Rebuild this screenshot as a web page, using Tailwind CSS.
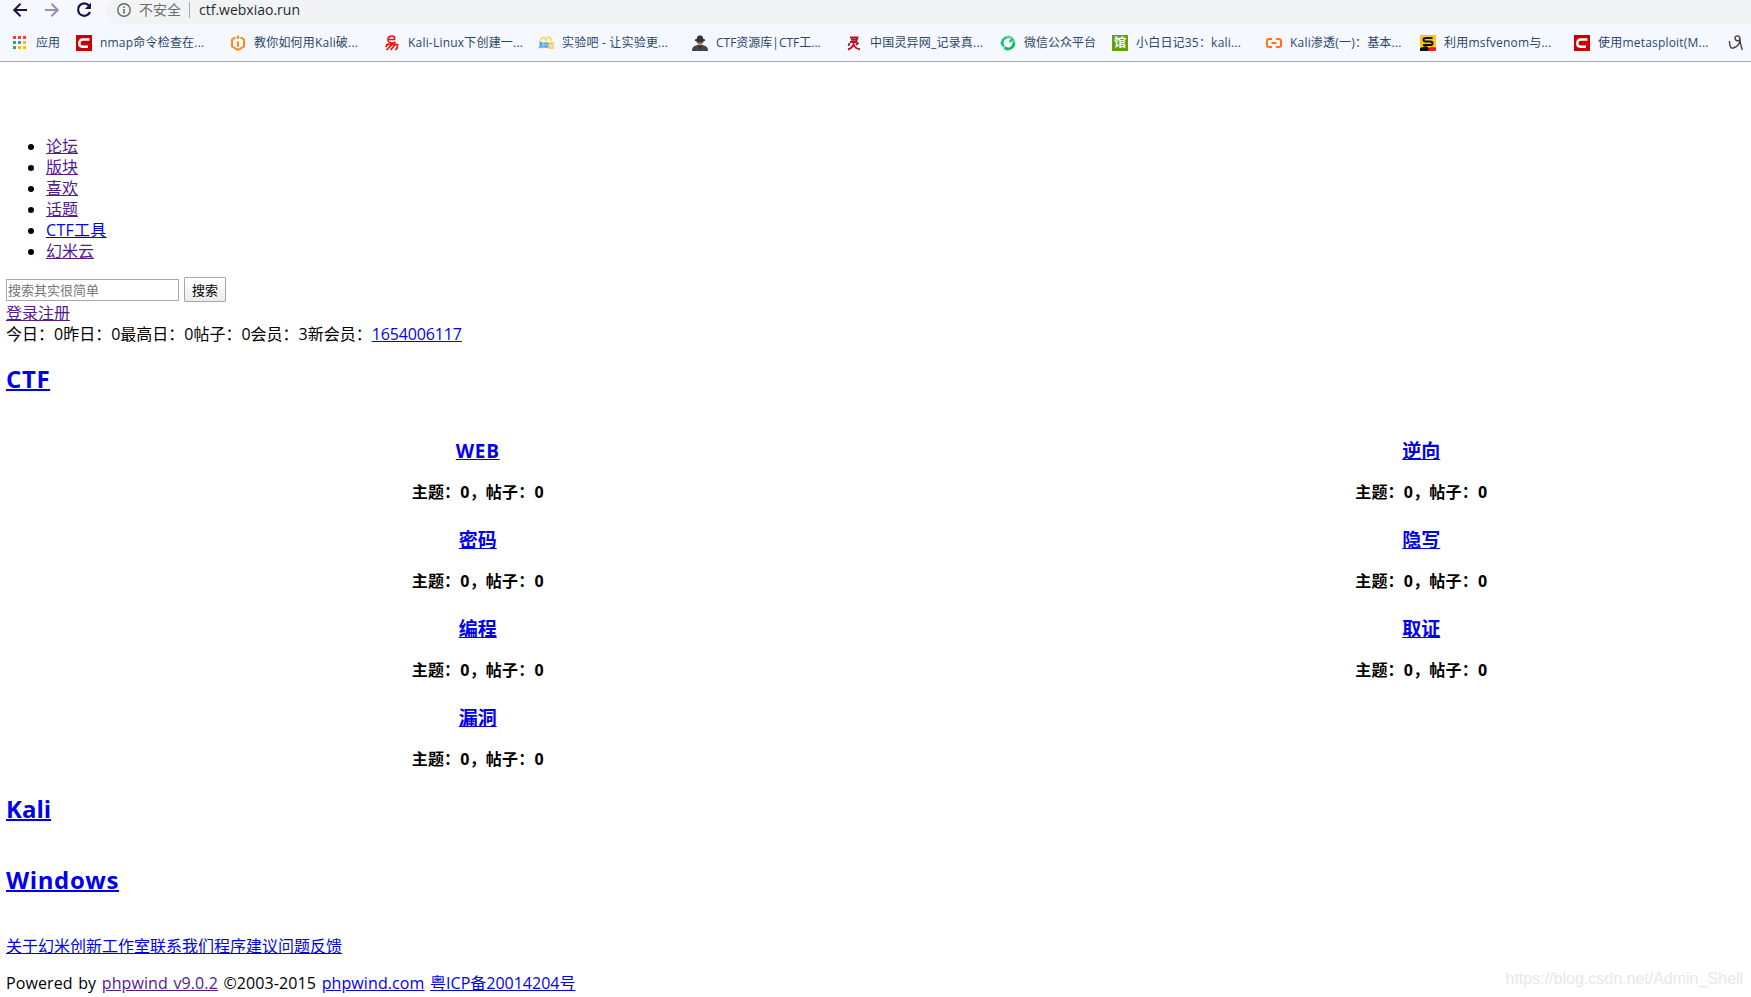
<!DOCTYPE html>
<html lang="zh-CN">
  <head>
    <meta charset="UTF-8" />
    <meta name="viewport" content="width=device-width, initial-scale=1.0" />
    <title>ctf.webxiao.run</title>
    <script src="https://cdn.jsdelivr.net/npm/@tailwindcss/browser@4"></script>
  </head>
  <body class="relative h-screen w-screen overflow-hidden bg-white text-black font-['Open_Sans','Noto_Sans_CJK_SC',sans-serif] text-base leading-[21px]">
    <!-- Browser toolbar -->
    <header class="h-[62px] bg-[#f5f8fe] border-b border-[#a9abb1] overflow-hidden whitespace-nowrap">
      <div class="flex h-6">
        <div class="flex w-[106px] shrink-0 pl-3 pt-[2px] gap-4">
          <svg class="size-4 shrink-0" viewBox="0 0 16 16" fill="none" stroke="#1b0f4c" stroke-width="2"><path d="M15 8H2.5M8.500 1.800 2.300 8l6.200 6.200" /></svg>
          <svg class="size-4 shrink-0" viewBox="0 0 16 16" fill="none" stroke="#9690b4" stroke-width="2"><path d="M1 8h12.500M7.500 1.800 13.700 8l-6.200 6.200" /></svg>
          <svg class="size-4 shrink-0" viewBox="0 0 16 16"><path d="M13 3.600A6.200 6.200 0 1 0 14 10" fill="none" stroke="#1b0f4c" stroke-width="2.200" /><path d="M15 .8v6.200H8.800z" fill="#1b0f4c" /></svg>
        </div>
        <div class="flex-1 h-6 rounded-bl-[18px] rounded-tl-[10px] bg-[#f1f3f4] flex pl-[11px]">
          <svg class="size-[14px] mt-[3px] shrink-0" viewBox="0 0 14 14"><circle cx="7" cy="7" r="6.200" fill="none" stroke="#666" stroke-width="1.400" /><path d="M6.200 6h1.600v4.500H6.200zM6.200 3.400h1.600V5H6.200z" fill="#666" /></svg>
          <span class="ml-2 text-sm leading-5 text-[#6a6d70]">不安全</span>
          <span class="ml-2 mt-[2px] w-px h-4 bg-[#a5a7a9]"></span>
          <span class="ml-[9px] text-sm leading-5 text-[#27292c]">ctf.webxiao.run</span>
        </div>
      </div>
      <nav class="flex items-center h-[37px] text-xs tracking-[0.2px] text-[#2b4668]">
        <div class="flex items-center gap-2 w-[76px] pl-3 shrink-0 tracking-normal">
          <svg class="size-4" viewBox="0 0 16 16"><path fill="#ea4335" d="M1 1h3v3H1zM6 1h3v3H6zM11 1h3v3h-3z" /><path fill="#34a853" d="M1 6h3v3H1zM1 11h3v3H1z" /><path fill="#4285f4" d="M6 6h3v3H6z" /><path fill="#fbbc05" d="M11 6h3v3h-3zM6 11h3v3H6zM11 11h3v3h-3z" /></svg>
          <span>应用</span>
        </div>
        <div class="flex items-center gap-2 w-[154px] shrink-0">
          <svg class="size-4" viewBox="0 0 16 16"><path fill="#c90000" d="M0 0h16v16H0z" /><path d="M13.500 4.500H7Q3.500 4.500 3.300 8t3.200 3.700H12" fill="none" stroke="#fff" stroke-width="2.500" /></svg>
          <span>nmap命令检查在...</span>
        </div>
        <div class="flex items-center gap-2 w-[154px] shrink-0">
          <svg class="size-4" viewBox="0 0 16 16" fill="none" stroke="#fb8b1c" stroke-width="2"><path d="M5.500 2.300 2 4.500v7l6 3.400 6-3.400v-7l-3.500-2.200M8 6.500V12" /><path d="M8 .5v3.500" /></svg>
          <span>教你如何用Kali破...</span>
        </div>
        <div class="flex items-center gap-2 w-[154px] shrink-0">
          <svg class="size-4" viewBox="0 0 16 16" fill="none" stroke="#f01010" stroke-width="1.700"><path d="M5 4.500h5.500C11 1.500 10 1 8 1 5.500 1 4 2.500 4 4.500S6 8 8.500 8s3-1 3-1M2 9.500h11.500c0 3-.5 5-2.500 5M5 8.500 1.500 12M7.500 10 2.500 15M11 10l-4.500 5" /></svg>
          <span>Kali-Linux下创建一...</span>
        </div>
        <div class="flex items-center gap-2 w-[154px] shrink-0">
          <svg class="size-4" viewBox="0 0 16 16"><path d="M2 7C3 2 6 1 8 5c1-4 5-4 5 1" fill="none" stroke="#f6d873" stroke-width="1.800" /><path d="M1 8h4M3 7v5M1 10h4M1 13l2-2 2 2M6 8h4v4H6zM8 8v5" fill="none" stroke="#3d91d2" stroke-width="1.200" /><path d="M11 8h4v5h-4zM13 8v3" fill="none" stroke="#f1c84c" stroke-width="1.300" /></svg>
          <span>实验吧 - 让实验更...</span>
        </div>
        <div class="flex items-center gap-2 w-[154px] shrink-0 tracking-normal">
          <svg class="size-4" viewBox="0 0 16 16"><path d="M0 16c0-4 2-5 5-6h6c3 1 5 2 5 6z" fill="#41464b" /><path d="M5.500 5h5v4L8 11 5.500 9z" fill="#b9774d" /><path d="M5 3.500Q5 0 8 .5 11 0 11 3.500l2 1V6H3V4.500zM4.500 6h7v1.500h-7z" fill="#303439" /><path d="m7 11 1 4 1-4z" fill="#1d2023" /></svg>
          <span>CTF资源库|CTF工...</span>
        </div>
        <div class="flex items-center gap-2 w-[154px] shrink-0">
          <svg class="size-4" viewBox="0 0 16 16" fill="none" stroke="#b5122b" stroke-width="1.900"><path d="M4 2.500h7.500L10 7H4M5 4.700h6M3.500 8l-1 3M12.500 7.500 10 10M8 6c0 4-2 7-6 8.500M7.500 9.500c1 2.500 3 4.500 6.500 4.700" /></svg>
          <span>中国灵异网_记录真...</span>
        </div>
        <div class="flex items-center gap-2 w-[112px] shrink-0 tracking-normal">
          <svg class="size-4" viewBox="0 0 16 16" fill="none" stroke-width="2.700"><path d="M2.500 10A6 6 0 0 1 7 2.200" stroke="#20c773" /><path d="M6.500 2.200c4-1.200 7.500 2 7.300 5.800" stroke="#5bd79a" /><path d="M14 7.500c0 5-5 8-9.500 5.500" stroke="#12b965" /><path d="M1 7l3 5M12.500 4l-3 3M8 15l-3-3" stroke="#16bd69" stroke-width="1.800" /></svg>
          <span>微信公众平台</span>
        </div>
        <div class="flex items-center gap-2 w-[154px] shrink-0">
          <span class="size-4 bg-[#62a307] text-white font-bold text-xs leading-4 text-center tracking-normal">馆</span>
          <span>小白日记35：kali...</span>
        </div>
        <div class="flex items-center gap-2 w-[154px] shrink-0">
          <svg class="size-4" viewBox="0 0 16 16" fill="none" stroke="#ff741a" stroke-width="2"><path d="M6 4H3Q1 4 1 6v4q0 2 2 2h3M10 4h3q2 0 2 2v4q0 2-2 2h-3M5.500 8h5" /></svg>
          <span>Kali渗透(一)：基本...</span>
        </div>
        <div class="flex items-center gap-2 w-[154px] shrink-0">
          <svg class="size-4" viewBox="0 0 16 16"><rect width="16" height="16" rx="1" fill="#fbc70a" /><path d="M0 16v-3l6-2 3 2v3z" fill="#111" /><path d="M8 16q0-4 4-4t4 1v2l-1 1z" fill="#e81c16" /><path d="M12.500 3H6Q3.500 3 3.500 4.800T6 6.500h4q2.500 0 2.500 1.800T10 10H3" fill="none" stroke="#111" stroke-width="2" /></svg>
          <span>利用msfvenom与...</span>
        </div>
        <div class="flex items-center gap-2 w-[154px] shrink-0">
          <svg class="size-4" viewBox="0 0 16 16"><path fill="#c90000" d="M0 0h16v16H0z" /><path d="M13.500 4.500H7Q3.500 4.500 3.300 8t3.200 3.700H12" fill="none" stroke="#fff" stroke-width="2.500" /></svg>
          <span>使用metasploit(M...</span>
        </div>
        <svg class="size-4 shrink-0" viewBox="0 0 16 16" fill="none" stroke="#444" stroke-width="1.400"><path d="M1.500 6c0 7 2 8 5 6.500C10 11 12 8 12 4c0-4-5-4-5-1s4 4 5 1c0 4 1 7 2.300 11" /></svg>
      </nav>
    </header>

    <main class="pl-[6px] overflow-hidden whitespace-nowrap">
      <ul class="mt-[74px] pl-10 list-disc">
        <li><a class="text-[#551a8b] underline" href="#">论坛</a></li>
        <li><a class="text-[#551a8b] underline" href="#">版块</a></li>
        <li><a class="text-[#551a8b] underline" href="#">喜欢</a></li>
        <li><a class="text-[#551a8b] underline" href="#">话题</a></li>
        <li><a class="text-[#0000ee] underline tracking-[0.3px]" href="#">CTF工具</a></li>
        <li><a class="text-[#551a8b] underline" href="#">幻米云</a></li>
      </ul>
      <form class="mt-[15px] flex items-center gap-[5px] h-[25px] text-[13px]">
        <input class="w-[173px] h-[22px] mt-px px-px border border-[#a9a9a9] bg-white leading-4 placeholder:text-[#757575]" placeholder="搜索其实很简单" />
        <button type="button" class="w-[42px] h-[25px] border border-[#a6a6a6] rounded-[1px] bg-linear-to-b from-white to-[#ececec] leading-4">搜索</button>
      </form>
      <div class="mt-px"><a class="text-[#551a8b] underline" href="#">登录注册</a></div>
      <div>今日：0昨日：0最高日：0帖子：0会员：3新会员：<a class="text-[#0000ee] underline tracking-[-0.15px]" href="#">1654006117</a></div>

      <h2 class="mt-[18px] h-[31px] text-2xl leading-[31px] font-bold tracking-[0.6px]"><a class="text-[#0000ee] underline decoration-2" href="#">CTF</a></h2>
      <!-- The board table is wider than the window -->
      <div class="mt-[45px] w-[1887px] grid grid-cols-2 auto-rows-[89px] text-center font-bold">
        <div>
          <h3 class="text-[19px] leading-6 tracking-[0.7px]"><a class="text-[#0000ee] underline" href="#">WEB</a></h3>
          <p class="mt-[19px] tracking-[0.2px]">主题：0，帖子：0</p>
        </div>
        <div>
          <h3 class="text-[19px] leading-6"><a class="text-[#0000ee] underline" href="#">逆向</a></h3>
          <p class="mt-[19px] tracking-[0.2px]">主题：0，帖子：0</p>
        </div>
        <div>
          <h3 class="text-[19px] leading-6"><a class="text-[#0000ee] underline" href="#">密码</a></h3>
          <p class="mt-[19px] tracking-[0.2px]">主题：0，帖子：0</p>
        </div>
        <div>
          <h3 class="text-[19px] leading-6"><a class="text-[#0000ee] underline" href="#">隐写</a></h3>
          <p class="mt-[19px] tracking-[0.2px]">主题：0，帖子：0</p>
        </div>
        <div>
          <h3 class="text-[19px] leading-6"><a class="text-[#0000ee] underline" href="#">编程</a></h3>
          <p class="mt-[19px] tracking-[0.2px]">主题：0，帖子：0</p>
        </div>
        <div>
          <h3 class="text-[19px] leading-6"><a class="text-[#0000ee] underline" href="#">取证</a></h3>
          <p class="mt-[19px] tracking-[0.2px]">主题：0，帖子：0</p>
        </div>
        <div>
          <h3 class="text-[19px] leading-6"><a class="text-[#0000ee] underline" href="#">漏洞</a></h3>
          <p class="mt-[19px] tracking-[0.2px]">主题：0，帖子：0</p>
        </div>
      </div>
      <h2 class="-mt-[2px] h-[31px] text-2xl leading-[31px] font-bold"><a class="text-[#0000ee] underline decoration-2" href="#">Kali</a></h2>
      <h2 class="mt-10 h-[31px] text-2xl leading-[31px] font-bold tracking-[0.6px]"><a class="text-[#0000ee] underline decoration-2" href="#">Windows</a></h2>

      <div class="mt-[41px]"><a class="text-[#0000ee] underline" href="#">关于幻米创新工作室联系我们程序建议问题反馈</a></div>
      <p class="mt-4 tracking-[0.1px] [word-spacing:1.3px]">Powered by <a class="text-[#551a8b] underline" href="#">phpwind v9.0.2</a> ©2003-2015 <a class="text-[#0000ee] underline" href="#">phpwind.com</a> <a class="text-[#0000ee] underline tracking-normal" href="#">粤ICP备20014204号</a></p>
    </main>
    <div class="absolute right-[8px] bottom-[8px] font-['Liberation_Sans',sans-serif] text-base leading-5 text-[#e8e8e8]">https://blog.csdn.net/Admin_Shell</div>
  </body>
</html>
